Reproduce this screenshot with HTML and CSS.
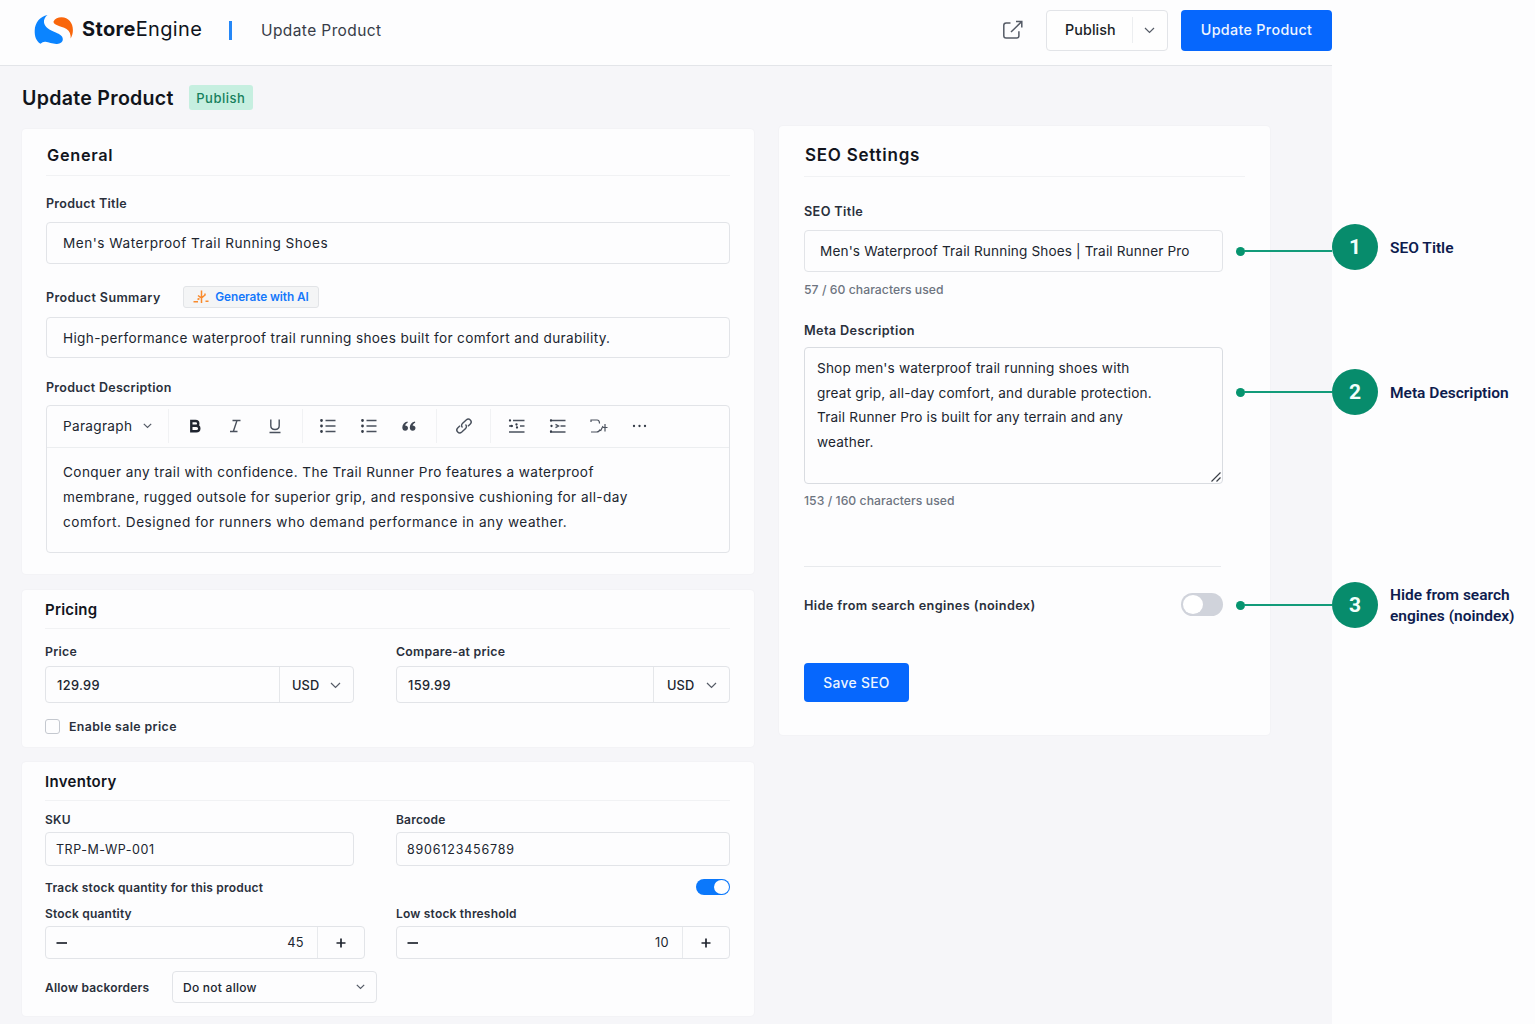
FILE: index.html
```html
<!DOCTYPE html>
<html lang="en">
<head>
    <meta charset="UTF-8">
    <meta name="viewport" content="width=device-width, initial-scale=1.0">
    <title>Update Product - StoreEngine</title>
    <link rel="stylesheet" href="styles.css">
</head>
<body>
    <div class="app">
        <header class="header">
            <a class="logo" href="#">
                <svg width="40" height="30" viewBox="0 0 40 30">
                    <path fill="#0b84ff" d="M13.500 0C6 1.500 1 7.500.700 15.500c-.200 5.500 1.300 10.500 5.800 13.300 1.500-1.300 3.200-2.200 5-2 3.500.400 7 2.300 11.500 2.100 3.500-.200 6-2.200 5.800-5-.200-3-3-4.600-7-6.300C15.500 15 10.500 12 10 7.500 9.700 4.500 11 2 13.500 0z"/>
                    <path fill="#f9660b" d="M19.500 6.500C21 3.500 24 2.200 27.500 2.200 34.500 2.300 39 8 38.900 15c0 3-.600 5.500-2.200 8.500.200-4-.900-7.300-4.200-9.500-3.200-2-6-2.300-9.300-3.700-2.200-1-3.800-2-3.700-3.800z"/>
                </svg>
                <span class="logo-text"><b>Store</b>Engine</span>
            </a>
            <span class="bar"></span>
            <span class="header-title">Update Product</span>
            <div class="header-actions">
                <svg class="ext" width="22" height="20" viewBox="0 0 22 20" fill="none" stroke="#555b66" stroke-width="1.500">
                    <path d="M8.500 3H4.200C2.500 3 1.800 3.800 1.800 5.300v10.500c0 1.500.700 2.300 2.300 2.300h10.600c1.500 0 2.200-.800 2.200-2.300v-4.500M14 1.500h5.800v6M19.500 1.800L9 12"/>
                </svg>
                <button class="btn-publish">
                    <span class="publish-text">Publish</span>
                    <span class="publish-arrow"><svg width="11" height="7" viewBox="0 0 11 7"><path class="chev" d="M1 1l4.500 4.500L10 1"/></svg></span>
                </button>
                <button class="btn-blue">Update Product</button>
            </div>
        </header>

        <div class="page-title">
            <h1>Update Product</h1>
            <span class="badge">Publish</span>
        </div>

        <main class="content">
            <div class="col-left">
                <section class="card general">
                    <h2>General</h2>
                    <label class="label">Product Title</label>
                    <div class="input input-title">Men's Waterproof Trail Running Shoes</div>
                    <div class="summary-row">
                        <label class="label">Product Summary</label>
                        <button class="btn-ai">
                            <svg width="16" height="14" viewBox="0 0 16 14" fill="none" stroke="#f98a2b" stroke-width="1.500">
                                <path d="M8.500.500v12.500M5 5.500l3.500 2.500 3.500-3M12 3.500v2M4.500 9.500l2-1M.500 11.800h4.500M12.500 11.300h3"/>
                            </svg>
                            Generate with AI
                        </button>
                    </div>
                    <div class="input input-summary">High-performance waterproof trail running shoes built for comfort and durability.</div>
                    <label class="label">Product Description</label>
                    <div class="editor">
                        <div class="toolbar">
                            <div class="tool-group tg-format">
                                <span>Paragraph</span>
                                <svg width="9" height="6" viewBox="0 0 9 6"><path class="chev" d="M.800.800l3.700 3.700L8.200.800"/></svg>
                            </div>
                            <div class="tool-group tg-style">
                                <svg width="20" height="20" viewBox="0 0 20 20"><path fill="none" stroke="#1f2530" stroke-width="2.400" d="M6.300 5h4.200c3.700 0 3.700 4.800 0 4.800H6.300zM6.300 9.800h5c4 0 4 5.400 0 5.400h-5z"/></svg>
                                <svg width="20" height="20" viewBox="0 0 20 20"><path class="ico" d="M7.500 4.500h8M5 15.500h7.500M12 4.500L8.300 15.500"/></svg>
                                <svg width="20" height="20" viewBox="0 0 20 20"><path class="ico" d="M5.800 3.500v6.300c0 5 8.400 5 8.400 0V3.500M4.500 16.500h11"/></svg>
                            </div>
                            <div class="tool-group tg-list">
                                <svg width="20" height="20" viewBox="0 0 20 20"><path class="ico" d="M7.500 4.500h10M7.500 10h10M7.500 15.500h10"/><path class="dots" d="M3.500 4.500h0M3.500 10h0M3.500 15.500h0"/></svg>
                                <svg width="20" height="20" viewBox="0 0 20 20"><path class="ico" d="M7.500 4.500h10M7.500 10h10M7.500 15.500h10"/><path class="dots" d="M3.500 4.500h0M3.500 10h0M3.500 15.500h0"/></svg>
                                <svg width="20" height="20" viewBox="0 0 20 20"><path fill="#3f4652" d="M8.500 5.500C5 6.200 3.300 8.500 3.300 11.500c0 2 1.200 3.300 2.900 3.300 1.700 0 2.800-1.200 2.800-2.700 0-1.600-1.100-2.600-2.900-2.600.300-1.300 1.100-2.200 2.600-2.800zM16 5.500c-3.500.700-5.200 3-5.200 6 0 2 1.200 3.300 2.900 3.300 1.700 0 2.800-1.200 2.800-2.700 0-1.600-1.100-2.600-2.900-2.600.300-1.300 1.100-2.200 2.600-2.800z"/></svg>
                            </div>
                            <div class="tool-group tg-link">
                                <svg width="20" height="20" viewBox="0 0 20 20"><path class="ico" d="M8.500 11.500c-1.300-1.200-1.200-2.800-.100-3.900l3.800-3.700c1.200-1.100 3-1.100 4.100 0s1.100 2.900 0 4l-2.300 2.300M11.500 8.500c1.300 1.200 1.200 2.800.100 3.900l-3.800 3.700c-1.200 1.100-3 1.100-4.100 0s-1.100-2.900 0-4L6 9.800"/></svg>
                            </div>
                            <div class="tool-group tg-indent">
                                <svg width="20" height="20" viewBox="0 0 20 20"><path class="ico" d="M6 4.500h11.500M13 10h4.500M2 16h15.500M2 10h4"/><path class="dots small" d="M3 4.500h0M4.500 10h0M9.500 8.500h0M10 11.500h0"/></svg>
                                <svg width="20" height="20" viewBox="0 0 20 20"><path class="ico" d="M2 4.500h15.500M12.500 10h5M2 16h15.500M7.500 8.300l3 1.700-3 1.700"/><path class="dots small" d="M3 4.500h0M3.500 10h0M3 15.500h0"/></svg>
                                <svg width="20" height="20" viewBox="0 0 20 20"><path class="ico thin" d="M2 6V4h6c1.700 0 2.500 1 2.500 3.500M2 16h5.500c2 0 3-1 3.500-2.500M11.500 15l2.500-5M16 8v7.500M14 11.500h4.500"/></svg>
                                <svg width="20" height="20" viewBox="0 0 20 20"><path class="dots small" d="M4 10h0M9.500 10h0M15 10h0"/></svg>
                            </div>
                        </div>
                        <div class="editor-body">
                            Conquer any trail with confidence. The Trail Runner Pro features a waterproof<br>
                            membrane, rugged outsole for superior grip, and responsive cushioning for all-day<br>
                            <span class="last-line">comfort. Designed for runners who demand performance in any weather.</span>
                        </div>
                    </div>
                </section>

                <section class="card pricing">
                    <h2>Pricing</h2>
                    <div class="row">
                        <div class="field">
                            <label class="label">Price</label>
                            <div class="group">
                                <span class="value">129.99</span>
                                <span class="currency">USD <svg width="11" height="7" viewBox="0 0 11 7"><path class="chev" d="M1 1l4.500 4.500L10 1"/></svg></span>
                            </div>
                        </div>
                        <div class="field field-right">
                            <label class="label">Compare-at price</label>
                            <div class="group">
                                <span class="value">159.99</span>
                                <span class="currency wide">USD <svg width="11" height="7" viewBox="0 0 11 7"><path class="chev" d="M1 1l4.500 4.500L10 1"/></svg></span>
                            </div>
                        </div>
                    </div>
                    <div class="check-row">
                        <span class="checkbox"></span>
                        <label class="label">Enable sale price</label>
                    </div>
                </section>

                <section class="card inventory">
                    <h2>Inventory</h2>
                    <div class="row">
                        <div class="field">
                            <label class="label">SKU</label>
                            <div class="input sku">TRP-M-WP-001</div>
                        </div>
                        <div class="field field-right">
                            <label class="label">Barcode</label>
                            <div class="input barcode">8906123456789</div>
                        </div>
                    </div>
                    <div class="track-row">
                        <label class="label">Track stock quantity for this product</label>
                        <span class="switch on"></span>
                    </div>
                    <div class="row">
                        <div class="field field-stock">
                            <label class="label">Stock quantity</label>
                            <div class="group stepper">
                                <svg width="12" height="12" viewBox="0 0 12 12"><path class="sign" d="M.500 6h10.500"/></svg>
                                <span class="qty">45</span>
                                <span class="plus"><svg width="12" height="12" viewBox="0 0 12 12"><path class="sign" d="M1.500 6h9M6 1.500v9"/></svg></span>
                            </div>
                        </div>
                        <div class="field field-right">
                            <label class="label">Low stock threshold</label>
                            <div class="group stepper">
                                <svg width="12" height="12" viewBox="0 0 12 12"><path class="sign" d="M.500 6h10.500"/></svg>
                                <span class="qty">10</span>
                                <span class="plus"><svg width="12" height="12" viewBox="0 0 12 12"><path class="sign" d="M1.500 6h9M6 1.500v9"/></svg></span>
                            </div>
                        </div>
                    </div>
                    <div class="backorder-row">
                        <label class="label">Allow backorders</label>
                        <div class="select">Do not allow <svg width="9" height="6" viewBox="0 0 9 6"><path class="chev" d="M.800.800l3.700 3.700L8.200.800"/></svg></div>
                    </div>
                </section>
            </div><!-- col-left -->

            <aside class="card seo">
                <h2>SEO Settings</h2>
                <div class="seo-body">
                    <label class="label">SEO Title</label>
                    <div class="input seo-title">Men's Waterproof Trail Running Shoes | Trail Runner Pro</div>
                    <p class="help">57 / 60 characters used</p>
                    <label class="label">Meta Description</label>
                    <div class="textarea">
                        Shop men's waterproof trail running shoes with<br>
                        great grip, all-day comfort, and durable protection.<br>
                        Trail Runner Pro is built for any terrain and any<br>
                        weather.
                        <svg class="grip" width="10" height="10" viewBox="0 0 10 10"><path d="M.500 9.500l9-9M5.500 9.500l4-4" stroke="#3a3f48" stroke-width="1.200"/></svg>
                    </div>
                    <p class="help help-meta">153 / 160 characters used</p>
                    <div class="noindex-row">
                        <label class="label">Hide from search engines (noindex)</label>
                        <span class="switch off"></span>
                    </div>
                    <button class="btn-blue btn-save">Save SEO</button>
                </div>
            </aside>
        </main>
    </div><!-- app -->

    <!-- callouts -->
    <div class="callout c1"><i class="dot"></i><i class="line"></i><b class="num">1</b><span>SEO Title</span></div>
    <div class="callout c2"><i class="dot"></i><i class="line"></i><b class="num">2</b><span>Meta Description</span></div>
    <div class="callout c3"><i class="dot"></i><i class="line"></i><b class="num">3</b><span>Hide from search<br>engines (noindex)</span></div>
</body>
</html>
```
FILE: styles.css
```css
*{margin: 0;padding: 0;box-sizing: border-box;}

body{
    width: 1535px;
    height: 1024px;
    overflow: hidden;
    position: relative;
    background: #fdfdfe;
    font-family: Inter, "Liberation Sans", sans-serif;
    font-size: 13.6px;
    color: #20252f;
}

button{
    font-family: inherit;
    border: none;
}

svg{
    display: block;
    flex-shrink: 0;
}

.chev{fill: none;stroke: #555b66;stroke-width: 1.2;}
.ico{fill: none;stroke: #4a515d;stroke-width: 1.4;}
.ico.thin{stroke-width: 1.2;}
.dots{fill: none;stroke: #343b47;stroke-width: 2.8;stroke-linecap: round;}
.dots.small{stroke-width: 2.3;}
.sign{stroke: #20252f;stroke-width: 1.7;}

.app{
    width: 1332px;
    height: 1024px;
    background: #f6f6f9;
}

/* header */
.header{
    height: 66px;
    padding: 0 0 5px 34px;
    display: flex;
    align-items: center;
    background: #fdfdfe;
    border-bottom: 1px solid #e3e5e9;
}

.logo{
    display: flex;
    align-items: center;
    gap: 8px;
    width: 195px;
    color: #10141c;
    text-decoration: none;
}

.logo-text{
    font-size: 20px;
    letter-spacing: .33px;
    line-height: 24px;
    padding-bottom: 2px;
    white-space: nowrap;
}
.logo-text b{font-weight: 700;}

.bar{
    width: 3px;
    height: 19px;
    background: #2587f7;
}

.header-title{
    margin-left: 29px;
    font-size: 15.5px;
    letter-spacing: .4px;
    color: #373c47;
}

.header-actions{
    margin-left: auto;
    display: flex;
    align-items: center;
}

.ext{margin-right: 22px;}

.btn-publish{
    width: 122px;
    height: 41px;
    display: flex;
    align-items: center;
    background: #fefefe;
    border: 1px solid #e2e4e8;
    border-radius: 4px;
    font-size: 14.3px;
    letter-spacing: .1px;
    font-weight: 500;
    color: #1a1e27;
}

.publish-text{width: 85px;padding: 0 0 1px 18px;text-align: left;}

.publish-arrow{
    height: 26px;
    flex: 1;
    display: flex;
    align-items: center;
    justify-content: center;
    padding-right: 2px;
    border-left: 1px solid #eceef0;
}

.btn-blue{
    width: 151px;
    height: 41px;
    margin-left: 13px;
    padding-bottom: 1px;
    background: #0667fd;
    border-radius: 4px;
    color: #eef5ff;
    font-size: 14.3px;
    letter-spacing: .33px;
    font-weight: 500;
}

/* page title */
.page-title{
    height: 63px;
    padding: 0 0 0 22px;
    display: flex;
    align-items: center;
    gap: 15px;
}

h1{font-size: 19.6px;letter-spacing: .28px;font-weight: 600;color: #11141b;}

.badge{
    width: 64px;
    height: 25px;
    line-height: 26px;
    text-align: center;
    border-radius: 3px;
    background: #c6efe0;
    color: #16805c;
    font-size: 13px;
    letter-spacing: .5px;
    font-weight: 500;
}

/* cards */
.content{
    display: flex;
    align-items: flex-start;
    gap: 25px;
    padding-left: 22px;
}

.col-left{width: 732px;}

.card{
    background: #fdfdfe;
    border-radius: 4px;
    box-shadow: 0 0 2px rgba(30,40,60,.05);
}

h2{
    font-size: 15px;
    letter-spacing: .2px;
    line-height: 20px;
    font-weight: 600;
    color: #12151d;
    border-bottom: 1px solid #f1f2f4;
}

.label{
    display: block;
    padding-top: 2px;
    font-size: 12.5px;
    letter-spacing: .28px;
    line-height: 14px;
    font-weight: 600;
    color: #2a303c;
    white-space: nowrap;
}

.input, .group, .select, .textarea, .editor{
    border: 1px solid #e2e4e8;
    border-radius: 4px;
}

.input{
    display: flex;
    align-items: center;
    height: 42px;
    padding: 0 0 1px 17px;
    white-space: nowrap;
}

.general{padding: 16px 24px 21px;}
.general h2{
    padding: 0 0 10px 1px;
    margin-bottom: 19px;
    font-size: 16.3px;
    letter-spacing: .7px;
}
.general .input{margin-top: 11px;padding-left: 16px;}
.input-title{letter-spacing: .5px;}

.summary-row{
    height: 22px;
    margin-top: 22px;
    display: flex;
    align-items: center;
    gap: 22px;
}

.summary-row .label{width: 115px;letter-spacing: .4px;}

.btn-ai{
    width: 136px;
    height: 22px;
    display: flex;
    align-items: center;
    justify-content: center;
    gap: 6px;
    background: #f4f5f6;
    border: 1px solid #e2e4e7;
    border-radius: 3px;
    color: #1478fb;
    font-size: 11.8px;
    font-weight: 600;
    letter-spacing: -.08px;
    white-space: nowrap;
}

.general .input-summary{height: 41px;margin: 9px 0 21px;padding-bottom: 0;letter-spacing: .36px;}

.editor{height: 148px;margin-top: 10px;}

.toolbar{
    height: 42px;
    padding-bottom: 2px;
    display: flex;
    align-items: center;
    border-bottom: 1px solid #eceef0;
}

.tool-group{
    height: 34px;
    display: flex;
    align-items: center;
    border-right: 1px solid #f1f2f4;
}

.tg-format{width: 122px;padding-left: 16px;gap: 11px;letter-spacing: .3px;}
.tg-style{width: 134px;padding-left: 16px;gap: 20px;}
.tg-list{width: 134px;padding-left: 15px;gap: 20.5px;}
.tg-link{width: 54px;padding-left: 17px;}
.tg-indent{padding-left: 16px;gap: 21px;border: none;}

.editor-body{
    padding: 12px 16px;
    line-height: 24.8px;
    letter-spacing: .42px;
    white-space: nowrap;
}

.last-line{letter-spacing: .52px;}

/* pricing / inventory */
.row{display: flex;justify-content: space-between;}
.field{width: 309px;}
.field-right{width: 334px;}
.field-stock{width: 320px;}

.pricing{margin-top: 16px;padding: 10px 24px 13px 23px;}
.pricing h2{padding-bottom: 8px;margin-bottom: 14px;}
.pricing .label{font-size: 12.3px;letter-spacing: .27px;}

.group{
    display: flex;
    align-items: center;
    height: 37px;
    margin-top: 7px;
    padding-left: 11px;
    font-size: 12.8px;
    letter-spacing: .35px;
    font-weight: 500;
}

.value{flex: 1;padding-top: 1px;}

.currency{
    width: 74px;
    height: 100%;
    display: flex;
    align-items: center;
    gap: 11px;
    padding: 1px 0 0 12px;
    letter-spacing: .1px;
    border-left: 1px solid #e5e7ea;
}

.currency.wide{width: 76px;padding-left: 13px;gap: 12px;}

.check-row{
    height: 16px;
    margin-top: 15px;
    display: flex;
    align-items: center;
    gap: 9px;
}

.check-row .label{padding-top: 1px;}
.pricing .check-row .label{letter-spacing: .4px;}

.checkbox{
    width: 15px;
    height: 15px;
    border: 1px solid #c4c8cf;
    border-radius: 3px;
}

.inventory{margin-top: 15px;padding: 10px 24px 13px 23px;}
.inventory h2{padding-bottom: 8px;margin-bottom: 10px;letter-spacing: .3px;}
.inventory .label{font-size: 12px;letter-spacing: .2px;}
.inventory .input{height: 34px;margin-top: 5px;padding: 0 0 0 10px;font-size: 12.5px;}
.inventory .sku{letter-spacing: .55px;}
.inventory .barcode{letter-spacing: .8px;}

.track-row{
    height: 16px;
    margin: 13px 0 10px;
    display: flex;
    align-items: center;
    justify-content: space-between;
}

.switch{display: block;border-radius: 12px;}
.switch::after{content: "";display: block;border-radius: 50%;background: #fff;}

.switch.on{width: 34px;height: 16px;padding: 1px;background: #0b78fb;}
.switch.on::after{width: 15px;height: 14px;margin-left: auto;}

.switch.off{width: 42px;height: 23px;padding: 2px;background: #d0d3db;}
.switch.off::after{width: 20px;height: 19px;}

.group.stepper{height: 33px;margin-top: 5px;padding-left: 10px;}
.qty{flex: 1;text-align: right;padding-right: 13px;font-weight: 400;}

.plus{
    width: 47px;
    height: 100%;
    display: flex;
    align-items: center;
    justify-content: center;
    border-left: 1px solid #e8eaed;
}

.backorder-row{
    margin-top: 12px;
    display: flex;
    align-items: center;
}

.backorder-row .label{width: 127px;}

.select{
    width: 205px;
    height: 32px;
    display: flex;
    align-items: center;
    justify-content: space-between;
    padding: 0 11px 0 10px;
    font-size: 12px;
    letter-spacing: .25px;
    font-weight: 500;
}

/* seo */
.seo{
    width: 491px;
    height: 609px;
    margin-top: -3px;
    padding: 19px 25px 0;
}

.seo h2{
    padding: 0 0 11px 1px;
    margin-bottom: 26px;
    font-size: 17px;
    letter-spacing: .75px;
}
.seo .label{font-size: 12.7px;letter-spacing: .37px;}
.seo-body{width: 419px;}
.seo-title{margin-top: 11px;padding-left: 15px;letter-spacing: .14px;}

.help{
    margin: 10px 0 24px;
    font-size: 12.2px;
    letter-spacing: .05px;
    line-height: 16px;
    font-weight: 500;
    color: #6d7480;
}

.textarea{
    position: relative;
    height: 137px;
    margin-top: 9px;
    padding: 8px 12px;
    line-height: 24.7px;
    letter-spacing: .18px;
    white-space: nowrap;
    border-color: #d9dce1;
}

.grip{position: absolute;right: 1px;bottom: 1px;}

.help-meta{margin: 9px 0 57px;}

.noindex-row{
    margin-right: 2px;
    padding-top: 26px;
    display: flex;
    align-items: center;
    border-top: 1px solid #e8eaed;
}

.noindex-row .switch{margin: 0 -2px 0 auto;}

.btn-save{width: 105px;height: 39px;margin: 47px 0 0;padding: 0;font-size: 13.8px;}

/* callouts over the page */
.callout{
    position: absolute;
    left: 1236px;
    height: 46px;
    display: flex;
    align-items: center;
    font-family: Roboto, "Liberation Sans", sans-serif;
    font-size: 15.5px;
    line-height: 21px;
    font-weight: 600;
    color: #0e1c4e;
    white-space: nowrap;
}

.c1{top: 224px;}
.c2{top: 369px;}
.c3{top: 582px;}

.dot{width: 9px;height: 9px;border-radius: 50%;background: #06946f;}
.line{width: 88px;height: 2px;margin-left: -1px;background: #129b7a;}

.c1 .dot, .c1 .line{margin-top: 8px;}
.callout span{padding-top: 2px;}

.num{
    width: 46px;
    height: 46px;
    margin-right: 12px;
    border-radius: 50%;
    background: #078c6c;
    color: #f2fffb;
    font-size: 21px;
    line-height: 46px;
    font-weight: 700;
    text-align: center;
}
```
